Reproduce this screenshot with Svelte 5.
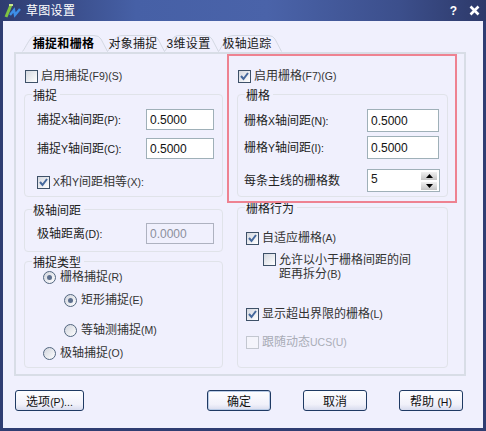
<script>
  const tabs = [
    { label: '捕捉和栅格', w: 86, active: true },
    { label: '对象捕捉', w: 58 },
    { label: '3维设置', w: 55 },
    { label: '极轴追踪', w: 64 }
  ]

  function tabPath(w) {
    return `M0.5 17.5 C4 13 7 5 11 2.5 Q13 1.5 16 1.5 L${w - 14} 1.5 Q${w - 9} 1.5 ${w - 7} 5 L${w - 0.5} 17.5`
  }
</script>

{#snippet check(on, cls = '')}
  <span class="box {cls}">
    {#if on}
      <svg width="11" height="11" viewBox="0 0 11 11"><path d="M2 5 L4.5 8 L9 2" fill="none" stroke="#45689c" stroke-width="2" /></svg>
    {/if}
  </span>
{/snippet}

{#snippet radio(on)}
  <span class="radio">{#if on}<i></i>{/if}</span>
{/snippet}

<div class="window">
  <div class="titlebar">
    <svg class="app-icon" width="18" height="18" viewBox="0 0 18 18">
      <path d="M2 15 L7 3" stroke="#7fc241" stroke-width="3" fill="none" />
      <path d="M5 3 L9 3" stroke="#c9e58e" stroke-width="2" fill="none" />
      <path d="M6 13 L10 8 L11 13 L16 7" stroke="#3d8fe8" stroke-width="2.4" fill="none" />
    </svg>
    <span class="title">草图设置</span>
    <span class="help">?</span>
    <svg class="close" width="11" height="11" viewBox="0 0 11 11">
      <path d="M1.5 1.5 L9.5 9.5 M9.5 1.5 L1.5 9.5" stroke="#fff" stroke-width="2.6" />
    </svg>
  </div>

  <div class="client">
    <div class="tabs">
      {#each tabs as t}
        <div class="tab" class:active={t.active} style="width: {t.w}px">
          <svg width={t.w} height="18" viewBox="0 0 {t.w} 18"><path d={tabPath(t.w)} /></svg>
          <span>{t.label}</span>
        </div>
      {/each}
    </div>

    <div class="page">
      <div class="col left">
        <label class="top-check">{@render check(false)}启用捕捉<small>(F9)(S)</small></label>

        <fieldset class="snap">
          <legend>捕捉</legend>
          <div class="row"><span class="lbl">捕捉<small>X</small>轴间距<small>(P):</small></span><input value="0.5000" /></div>
          <div class="row"><span class="lbl">捕捉<small>Y</small>轴间距<small>(C):</small></span><input value="0.5000" /></div>
          <label class="check-row equal">{@render check(true)}<small>X</small>和<small>Y</small>间距相等<small>(X):</small></label>
        </fieldset>

        <fieldset class="polar">
          <legend>极轴间距</legend>
          <div class="row"><span class="lbl">极轴距离<small>(D):</small></span><input class="off" value="0.0000" disabled /></div>
        </fieldset>

        <fieldset class="type">
          <legend>捕捉类型</legend>
          <label class="radio-row r1">{@render radio(true)}栅格捕捉<small>(R)</small></label>
          <label class="radio-row r2">{@render radio(true)}矩形捕捉<small>(E)</small></label>
          <label class="radio-row r3">{@render radio(false)}等轴测捕捉<small>(M)</small></label>
          <label class="radio-row r4">{@render radio(false)}极轴捕捉<small>(O)</small></label>
        </fieldset>
      </div>

      <div class="col right">
        <label class="top-check">{@render check(true)}启用栅格<small>(F7)(G)</small></label>

        <fieldset class="grid-set">
          <legend>栅格</legend>
          <div class="row first"><span class="lbl">栅格<small>X</small>轴间距<small>(N):</small></span><input class="tall" value="0.5000" /></div>
          <div class="row"><span class="lbl">栅格<small>Y</small>轴间距<small>(I):</small></span><input class="tall" value="0.5000" /></div>
          <div class="row"><span class="lbl">每条主线的栅格数</span>
            <div class="spin">
              <span>5</span>
              <div class="arrows">
                <b><svg width="7" height="4" viewBox="0 0 7 4"><path d="M3.5 0 L7 4 L0 4 Z" /></svg></b>
                <b><svg width="7" height="4" viewBox="0 0 7 4"><path d="M0 0 L7 0 L3.5 4 Z" /></svg></b>
              </div>
            </div>
          </div>
        </fieldset>

        <fieldset class="behave">
          <legend>栅格行为</legend>
          <label class="check-row adaptive">{@render check(true)}自适应栅格<small>(A)</small></label>
          <label class="check-row allow">{@render check(false)}<span>允许以小于栅格间距的间<br />距再拆分<small>(B)</small></span></label>
          <label class="check-row limits">{@render check(true)}显示超出界限的栅格<small>(L)</small></label>
          <label class="check-row ucs">{@render check(false, 'dim')}跟随动态<small>UCS(U)</small></label>
        </fieldset>
      </div>

      <div class="highlight"></div>
    </div>

    <div class="buttons">
      <button class="options">选项<small>(P)...</small></button>
      <button class="ok">确定</button>
      <button class="cancel">取消</button>
      <button class="helpbtn">帮助 <small>(H)</small></button>
    </div>
  </div>
</div>

<style>
  :global(body) {
    margin: 0;
  }

  .window {
    width: 486px;
    height: 431px;
    box-sizing: border-box;
    display: flex;
    flex-direction: column;
    background: #2f3d72;
    font: 12px/14px "Liberation Sans", "Noto Sans CJK SC", sans-serif;
    color: #1a1a1a;
    overflow: hidden;
  }

  small {
    font-size: 10.5px;
  }

  .titlebar {
    height: 21px;
    flex: none;
    display: flex;
    align-items: center;
    color: #fff;
    background: linear-gradient(90deg, #2f3c70 0%, #4660a6 28%, #4a63a9 55%, #3c4f8c 82%, #2d3969 100%);
  }

  .app-icon {
    margin-left: 4px;
  }

  .title {
    margin-left: 4px;
    font-size: 12px;
    letter-spacing: 0.3px;
  }

  .help {
    margin-left: auto;
    font-weight: bold;
    font-size: 12px;
  }

  .close {
    margin: 0 6px 0 12px;
  }

  .client {
    flex: 1;
    margin: 0 3px 3px;
    background: #f0f0fd;
    display: flex;
    flex-direction: column;
  }

  .tabs {
    height: 18px;
    margin: 13px 0 0 19px;
    display: flex;
    flex: none;
  }

  .tab {
    position: relative;
    height: 18px;
    margin-right: -1px;
    display: flex;
    align-items: center;
    justify-content: center;
    padding: 1px 6px 0 0;
    box-sizing: border-box;
  }

  .tab svg {
    position: absolute;
    left: 0;
    top: 0;
  }

  .tab path {
    fill: none;
    stroke: #d3d8e2;
  }

  .tab span {
    position: relative;
    letter-spacing: 0.3px;
  }

  .tab.active {
    font-weight: bold;
    color: #000;
    padding-right: 3px;
  }

  .tab.active path {
    fill: #eeeefb;
  }

  .page {
    position: relative;
    width: 452px;
    height: 324px;
    box-sizing: border-box;
    margin-left: 11px;
    border: 2px solid #d8dde6;
    display: grid;
    grid-template-columns: 199px 211px;
    column-gap: 14px;
    padding-left: 8px;
    flex: none;
  }

  .col {
    display: flex;
    flex-direction: column;
  }

  .top-check {
    display: flex;
    align-items: center;
    height: 14px;
    margin: 15px 0 0 1px;
    color: #333;
  }

  .box {
    width: 11px;
    height: 11px;
    flex: none;
    margin-right: 3px;
    border: 1px solid #3e5168;
    background: linear-gradient(135deg, #d4d8e0, #fff);
    display: inline-flex;
  }

  .box.dim {
    border-color: #c3c7d0;
    background: #f4f4fb;
  }

  .radio {
    width: 11px;
    height: 11px;
    flex: none;
    margin-right: 4px;
    border: 1px solid #52667f;
    border-radius: 50%;
    background: linear-gradient(135deg, #d0d4dc, #fff);
    display: inline-flex;
    align-items: center;
    justify-content: center;
  }

  .radio i {
    width: 5px;
    height: 5px;
    border-radius: 50%;
    background: #5d6f8e;
  }

  fieldset {
    margin: 0;
    padding: 4px 0 0;
    border: 1px solid #e0e3e9;
    border-radius: 4px;
    box-sizing: border-box;
    min-width: 0;
  }

  /* top padding drops the caption below the line, as in the old dialog look */
  legend {
    margin-left: 7px;
    padding: 4px 3px 0 1px;
    line-height: 13px;
  }

  .snap {
    margin-top: 3px;
    height: 111px;
  }

  .polar {
    margin-top: 4px;
    height: 51px;
  }

  .type {
    margin-top: 1px;
    height: 115px;
  }

  .grid-set {
    margin-top: 3px;
    height: 111px;
  }

  .behave {
    margin-top: 2px;
    height: 169px;
  }

  .row {
    display: flex;
    align-items: center;
    justify-content: space-between;
    padding: 0 8px 0 12px;
    margin-top: 2px;
    margin-bottom: 8px;
  }

  .polar .row {
    margin-top: 1px;
  }

  .right .row {
    padding: 0 8px 0 6px;
    margin-top: 0;
    margin-bottom: 10px;
  }

  .right .row.first {
    margin-top: 2px;
    margin-bottom: 4px;
  }

  .lbl {
    color: #222;
  }

  input {
    width: 68px;
    height: 21px;
    box-sizing: border-box;
    padding: 1px 3px;
    border: 1px solid #9fb0b8;
    background: #fff;
    font: 12px "Liberation Sans", sans-serif;
    color: #111;
    outline: none;
  }

  input.tall {
    width: 72px;
    height: 23px;
  }

  input.off {
    background: #f0f0fd;
    border-color: #aeb2c0;
    color: #8b8f9c;
  }

  .spin {
    width: 73px;
    height: 23px;
    box-sizing: border-box;
    border: 1px solid #9fb0b8;
    background: #fff;
    margin-right: -1px;
    display: flex;
    justify-content: space-between;
    padding: 2px 2px 0 3px;
  }

  .arrows {
    display: flex;
    flex-direction: column;
    gap: 2px;
  }

  .arrows b {
    width: 16px;
    height: 8px;
    background: linear-gradient(#f0f0f0, #c4c4c4);
    display: flex;
    align-items: center;
    justify-content: center;
  }

  .check-row,
  .radio-row {
    display: flex;
    align-items: center;
    color: #333;
  }

  .equal {
    margin: 16px 0 0 12px;
  }

  .adaptive {
    margin: 11px 0 0 8px;
  }

  .allow {
    margin: 8px 0 0 25px;
    align-items: flex-start;
  }

  .limits {
    margin: 26px 0 0 8px;
  }

  .ucs {
    margin: 14px 0 0 8px;
    color: #a9acb6;
  }

  .r1 {
    margin: -4px 0 0 18px;
  }

  .r2 {
    margin: 9px 0 0 39px;
  }

  .r3 {
    margin: 16px 0 0 39px;
  }

  .r4 {
    margin: 9px 0 0 18px;
  }

  .highlight {
    position: absolute;
    left: 211px;
    top: 0;
    width: 226px;
    height: 145px;
    border: 2px solid #ee8291;
    pointer-events: none;
  }

  .buttons {
    display: flex;
    margin: 14px 0 0 12px;
  }

  button {
    height: 21px;
    box-sizing: border-box;
    padding: 0;
    border: 1px solid #1f3a63;
    border-radius: 3px;
    background: linear-gradient(#fdfdff, #f1f1fa 70%, #d8dcee);
    font: 12px "Liberation Sans", "Noto Sans CJK SC", sans-serif;
    color: #111;
  }

  .options {
    width: 69px;
  }

  .ok {
    width: 64px;
    margin-left: 123px;
    box-shadow: inset 0 0 0 1px #b9cbe6;
  }

  .cancel {
    width: 64px;
    margin-left: 32px;
  }

  .helpbtn {
    width: 64px;
    margin-left: 32px;
  }
</style>
